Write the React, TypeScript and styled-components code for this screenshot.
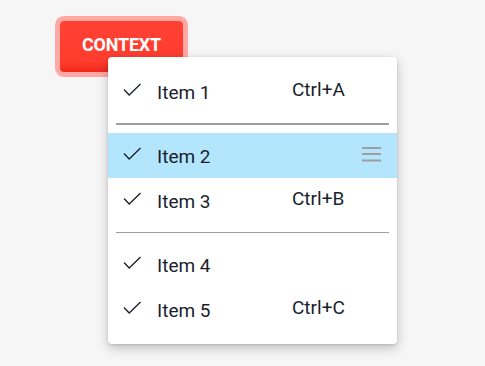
import React from "react";
import styled, { createGlobalStyle } from "styled-components";

const Global = createGlobalStyle`
  html, body { margin: 0; padding: 0; background: #f6f6f6; }
  body { font-family: Roboto, "Noto Sans", sans-serif; width: 485px; height: 366px; overflow: hidden; }
`;

const Page = styled.div`
  position: relative;
  width: 485px;
  height: 366px;
  padding: 21px 0 0 60px;
  box-sizing: border-box;
`;

const ContextButton = styled.button`
  width: 123px;
  height: 51px;
  padding: 0 0 5px;
  border: none;
  border-radius: 4px;
  background: linear-gradient(#ff4133 0%, #ff3d2f 80%, #f0281c 100%);
  color: #fff;
  font-family: Roboto, sans-serif;
  font-weight: 700;
  font-size: 18px;
  letter-spacing: -0.2px;
  box-shadow: 0 0 0 5px #ffa9a4;
  cursor: pointer;
`;

const Menu = styled.ul`
  position: absolute;
  left: 108px;
  top: 57px;
  width: 289px;
  margin: 0;
  padding: 12px 0;
  list-style: none;
  background: #fff;
  border-radius: 4px;
  box-shadow: 0 4px 12px rgba(0, 0, 0, 0.22), 0 1px 3px rgba(0, 0, 0, 0.12);
  box-sizing: border-box;
`;

const Row = styled.li<{ $active?: boolean }>`
  display: flex;
  align-items: center;
  height: 45px;
  padding: 0 16px 0 15px;
  background: ${(p) => (p.$active ? "#b3e5fc" : "transparent")};
  color: #1a1f2e;
  font-size: 19px;
`;

const Check = styled.svg`
  width: 18px;
  height: 14px;
  margin-top: -4px;
  flex: none;
`;

const Label = styled.span`
  margin-left: 16px;
  margin-top: 2px;
  flex: 1;
`;

const Shortcut = styled.span`
  width: 89px;
  margin-top: -4px;
  flex: none;
`;

const Divider = styled.li<{ $thick?: boolean }>`
  height: ${(p) => (p.$thick ? 2 : 1)}px;
  margin: 9px 8px ${(p) => (p.$thick ? 8 : 9)}px;
  background: #9e9e9e;
`;

const Handle = styled.svg`
  width: 19px;
  height: 15px;
  margin-top: -2px;
  flex: none;
`;

const CheckIcon = () => (
  <Check viewBox="0 0 18 14">
    <path d="M1 6.5 L6.2 12 L17.5 1" fill="none" stroke="#1a1f2e" strokeWidth="1.3" />
  </Check>
);

const items = [
  { label: "Item 1", shortcut: "Ctrl+A" },
  "thick",
  { label: "Item 2", active: true },
  { label: "Item 3", shortcut: "Ctrl+B" },
  "thin",
  { label: "Item 4" },
  { label: "Item 5", shortcut: "Ctrl+C" },
] as const;

export default function App() {
  return (
    <>
      <Global />
      <Page>
        <ContextButton>CONTEXT</ContextButton>
        <Menu>
          {items.map((it, i) => {
            if (it === "thick") return <Divider key={i} $thick />;
            if (it === "thin") return <Divider key={i} />;
            const item = it as { label: string; shortcut?: string; active?: boolean };
            return (
              <Row key={i} $active={item.active}>
                <CheckIcon />
                <Label>{item.label}</Label>
                {item.active ? (
                  <Handle viewBox="0 0 19 15">
                    <rect x="0" y="0" width="19" height="2" fill="#9e9e9e" />
                    <rect x="0" y="6" width="19" height="2" fill="#9e9e9e" />
                    <rect x="0" y="12.5" width="19" height="2" fill="#9e9e9e" />
                  </Handle>
                ) : (
                  item.shortcut && <Shortcut>{item.shortcut}</Shortcut>
                )}
              </Row>
            );
          })}
        </Menu>
      </Page>
    </>
  );
}
